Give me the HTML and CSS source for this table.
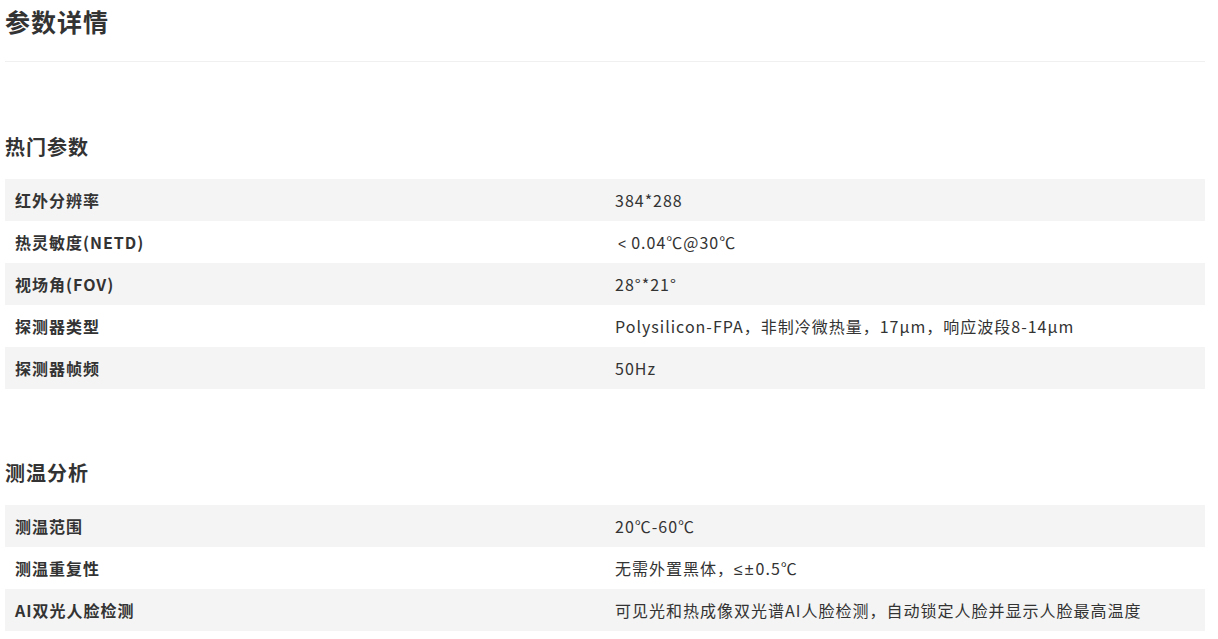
FILE: index.html
```html
<!DOCTYPE html>
<html lang="zh-CN">
<head>
<meta charset="utf-8">
<title>参数详情</title>
<link rel="stylesheet" href="styles.css">
</head>
<body>
<div class="page">
  <h1 class="title">参数详情</h1>

  <section class="group">
    <h2 class="group-title">热门参数</h2>
    <div class="table">
      <div class="row"><div class="cell key">红外分辨率</div><div class="cell val">384*288</div></div>
      <div class="row"><div class="cell key">热灵敏度(NETD)</div><div class="cell val"><span class="sym lt">&lt;</span>0.04℃@30℃</div></div>
      <div class="row"><div class="cell key">视场角(FOV)</div><div class="cell val">28°*21°</div></div>
      <div class="row"><div class="cell key">探测器类型</div><div class="cell val">Polysilicon-FPA，非制冷微热量，17μm，响应波段8-14μm</div></div>
      <div class="row"><div class="cell key">探测器帧频</div><div class="cell val">50Hz</div></div>
    </div>
  </section>

  <section class="group">
    <h2 class="group-title">测温分析</h2>
    <div class="table">
      <div class="row"><div class="cell key">测温范围</div><div class="cell val">20℃-60℃</div></div>
      <div class="row"><div class="cell key">测温重复性</div><div class="cell val">无需外置黑体，<span class="sym">≤±</span>0.5℃</div></div>
      <div class="row"><div class="cell key">AI双光人脸检测</div><div class="cell val">可见光和热成像双光谱AI人脸检测，自动锁定人脸并显示人脸最高温度</div></div>
    </div>
  </section>
</div>
</body>
</html>
```

FILE: styles.css
```css
html, body {
  margin: 0;
  padding: 0;
  background: #ffffff;
}

body {
  font-family: "Noto Sans CJK SC", "Open Sans", sans-serif;
  color: #333333;
}

.page {
  width: 1200px;
  margin-left: 5px;
}

.title {
  margin: 0;
  font-size: 25px;
  font-weight: 700;
  line-height: 42px;
  letter-spacing: 1px;
  padding-bottom: 19px;
  border-bottom: 1px solid #f0f0f0;
  color: #333333;
}

.group {
  padding-top: 70px;
}

.group + .group {
  padding-top: 69px;
}

.group-title {
  margin: 0 0 17px 0;
  font-size: 20px;
  font-weight: 700;
  line-height: 30px;
  letter-spacing: 1px;
  color: #333333;
}

.table {
  display: flex;
  flex-direction: column;
}

.row {
  display: grid;
  grid-template-columns: 600px 600px;
  height: 42px;
}

.row:nth-child(odd) {
  background: #f4f4f4;
}

.cell {
  padding-left: 10px;
  font-size: 16px;
  line-height: 42px;
  letter-spacing: 1px;
  white-space: nowrap;
}

.key {
  font-weight: 700;
}

.val {
  font-weight: 400;
}

.sym {
  font-family: "Liberation Sans", "DejaVu Sans", sans-serif;
  letter-spacing: 2px;
}

.lt {
  display: inline-block;
  padding-left: 3px;
  padding-right: 3px;
  font-size: 14px;
}
```
